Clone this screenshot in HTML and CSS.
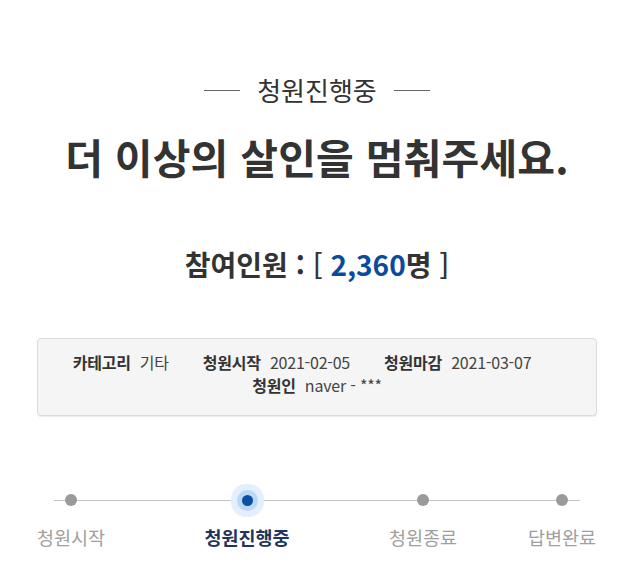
FILE: index.html
```html
<!DOCTYPE html>
<html lang="ko">
<head>
<meta charset="utf-8">
<link rel="stylesheet" href="styles.css">
</head>
<body>
<div class="page">
  <div class="status">
    <span class="status-line"></span>
    <span class="status-text">청원진행중</span>
    <span class="status-line"></span>
  </div>
  <h1 class="title">더 이상의 살인을 멈춰주세요.</h1>
  <div class="count">참여인원 <span class="colon">:</span> <span class="bracket">[</span> <span class="num">2,360</span>명 <span class="bracket">]</span></div>
  <div class="info">
    <div class="info-row row-first">
      <span class="item"><b class="label">카테고리</b><span class="value">기타</span></span>
      <span class="item"><b class="label">청원시작</b><span class="value">2021-02-05</span></span>
      <span class="item"><b class="label">청원마감</b><span class="value">2021-03-07</span></span>
    </div>
    <div class="info-row">
      <span class="item"><b class="label">청원인</b><span class="value">naver - ***</span></span>
    </div>
  </div>
  <div class="steps">
    <div class="track"></div>
    <div class="step step-1"><span class="dot"></span><span class="step-label">청원시작</span></div>
    <div class="step step-2 active"><span class="dot"></span><span class="step-label">청원진행중</span></div>
    <div class="step step-3"><span class="dot"></span><span class="step-label">청원종료</span></div>
    <div class="step step-4"><span class="dot"></span><span class="step-label">답변완료</span></div>
  </div>
</div>
</body>
</html>
```
FILE: styles.css
```css
* { box-sizing: border-box; }
html, body { margin: 0; padding: 0; background: #fff; }
body {
  font-family: "Noto Sans CJK KR", "Noto Sans", sans-serif;
  color: #333;
}
.page {
  width: 634px;
  padding-top: 74px;
}
.status {
  display: flex;
  justify-content: center;
  align-items: center;
  gap: 17px;
  height: 32px;
}
.status-line {
  display: block;
  width: 36px;
  height: 1px;
  background: #666;
}
.status-text {
  font-size: 26px;
  line-height: 32px;
  color: #333;
}
.title {
  margin: 25px 0 0;
  text-align: center;
  font-size: 41px;
  line-height: 50px;
  font-weight: 700;
  color: #333;
  letter-spacing: 0.2px;
}
.count {
  margin-top: 63px;
  text-align: center;
  font-size: 28px;
  line-height: 40px;
  font-weight: 700;
  color: #333;
}
.count .bracket { font-weight: 500; }
.count .num { color: #0b4a9c; }
.info {
  margin: 54px 37px 0 37px;
  background: #f5f5f5;
  border: 1px solid #dcdcdc;
  border-radius: 4px;
  box-shadow: 0 1px 1px rgba(0,0,0,0.08);
  padding: 12px 0 18px;
}
.info-row {
  display: flex;
  justify-content: center;
  font-size: 16px;
  line-height: 23px;
  letter-spacing: -0.2px;
}
.row-first { padding-right: 30px; }
.row-first .item { margin-right: 34px; }
.row-first .item:last-child { margin-right: 0; }
.label { font-weight: 700; color: #333; margin-right: 9px; }
.value { color: #444; }
.steps {
  position: relative;
  margin: 67px 0 0 37px;
  display: grid;
  grid-template-columns: 68px 99px 86px 99px 68px 71px 68px;
}
.track {
  position: absolute;
  left: 17px;
  width: 526px;
  top: 17px;
  height: 1px;
  background: #c4c4c4;
}
.step {
  display: flex;
  flex-direction: column;
  align-items: center;
  position: relative;
}
.step-1 { grid-column: 1; }
.step-2 { grid-column: 3; }
.step-3 { grid-column: 5; }
.step-4 { grid-column: 7; }
.dot {
  width: 12px;
  height: 12px;
  margin: 11px 0;
  border-radius: 50%;
  background: #9a9a9a;
}
.active .dot {
  width: 11px;
  height: 11px;
  margin: 11.5px 0;
  background: #0b4ea2;
  box-shadow: 0 0 0 5px #bcd8f7, 0 0 0 11px #e3effc;
}
.step-label {
  margin-top: 7px;
  font-size: 18.5px;
  line-height: 26px;
  color: #a0a0a0;
  white-space: nowrap;
}
.active .step-label {
  color: #1e3560;
  font-weight: 700;
}
```
